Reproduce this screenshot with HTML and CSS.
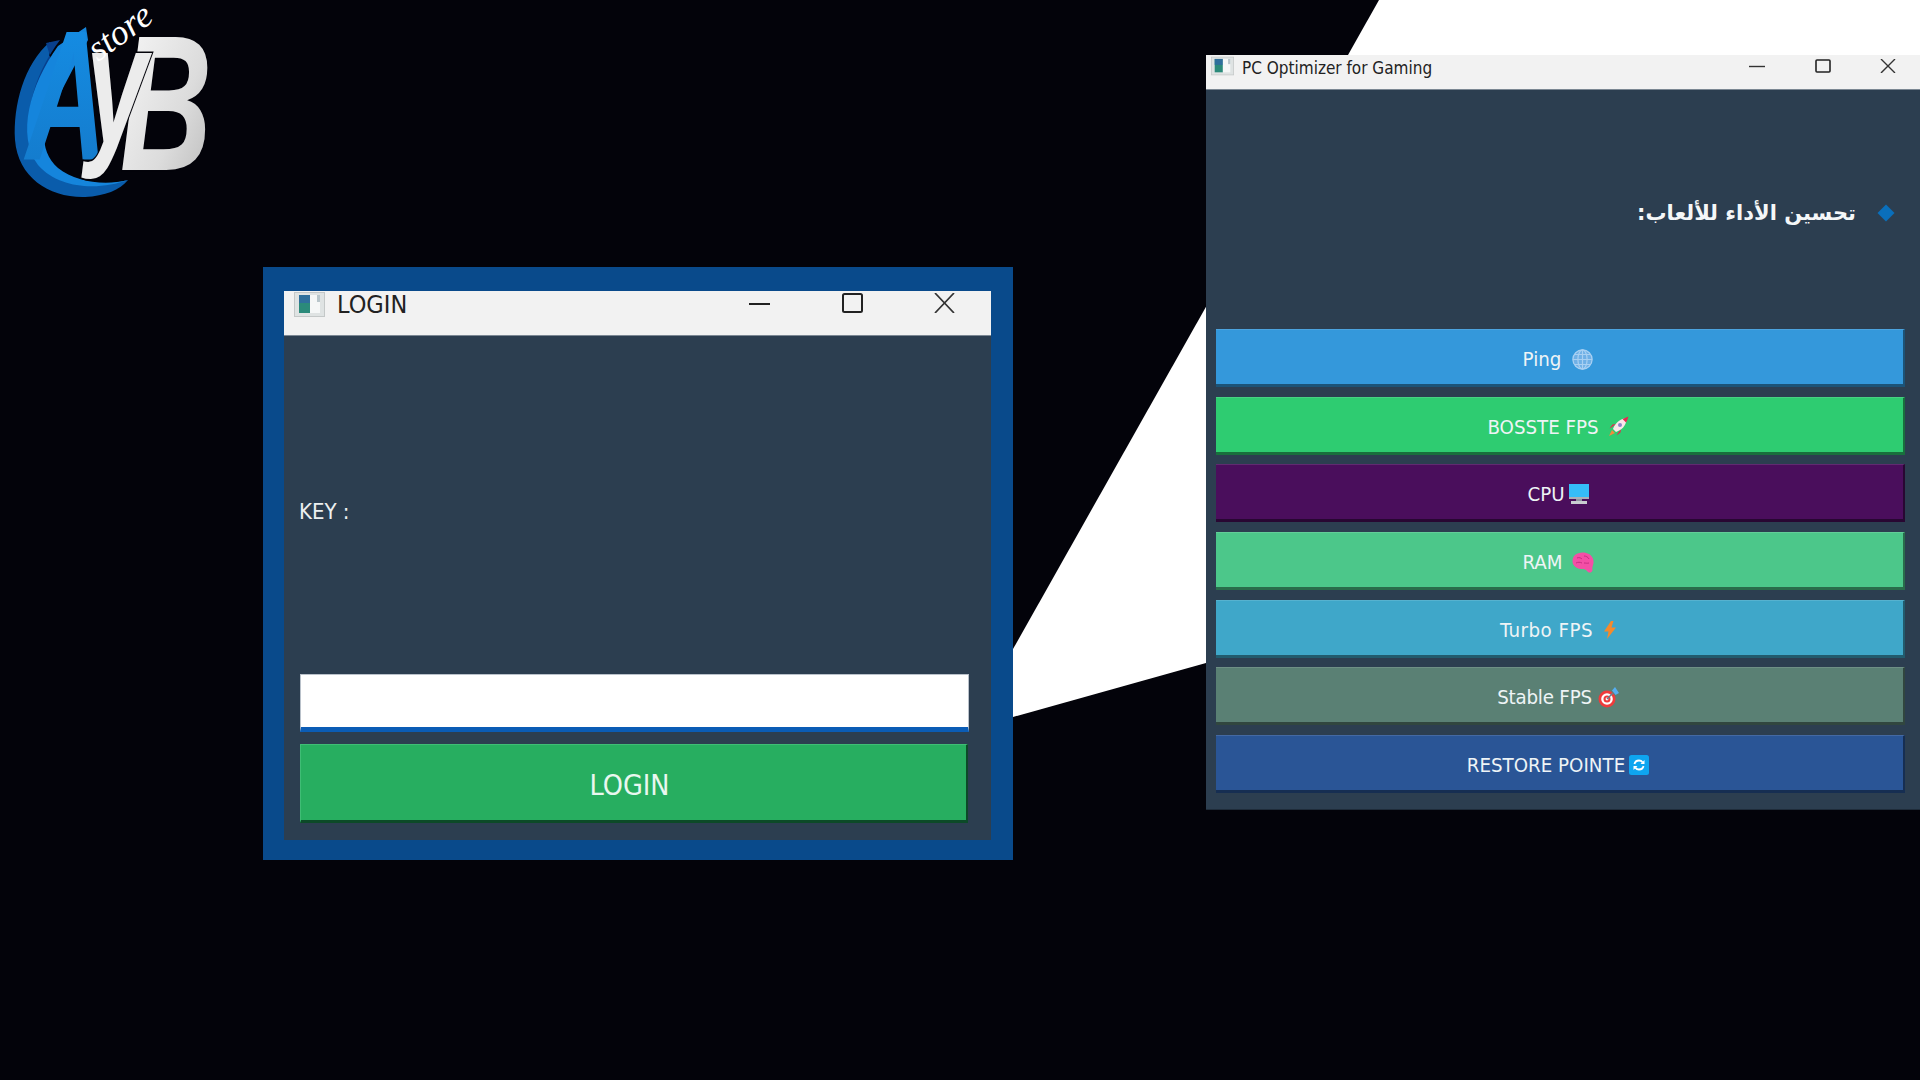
FILE: index.html
```html
<!DOCTYPE html>
<html lang="en">
<head>
<meta charset="utf-8">
<title>AyB store</title>
<link rel="stylesheet" href="styles.css">
</head>
<body>
<div class="desktop">
  <svg class="backdrop" viewBox="0 0 1920 1080" aria-hidden="true"><polygon points="1379,0 1920,0 1920,463 1013,717 1013,649" fill="#fff"/></svg>

  <svg class="logo" viewBox="0 0 240 210" role="img" aria-label="AyB store">
    <defs>
      <linearGradient id="bGrad" x1="0" y1="0" x2="1" y2="1"><stop offset="0" stop-color="#fbfbfb"/><stop offset=".6" stop-color="#dcdcdc"/><stop offset="1" stop-color="#b5b5b5"/></linearGradient>
      <linearGradient id="aGrad" x1="0" y1="0" x2="0" y2="1"><stop offset="0" stop-color="#1590e8"/><stop offset="1" stop-color="#1478c8"/></linearGradient>
    </defs>
    <path d="M50 42C24 64 13 105 15 140C18 178 50 198 85 197C105 196 120 190 128 180C100 188 60 184 42 160C25 136 30 100 48 75Z" fill="#0a5cab"/>
    <path d="M46 43L60 40C36 72 24 110 32 140C26 105 36 78 52 62Z" fill="#083f8c"/>
    <path d="M58 46L86 27L88 40L62 90C40 120 38 150 58 168C76 182 104 186 128 180C100 190 60 190 38 165C16 135 30 85 58 46Z" fill="#1585dc"/>
    <text class="logo-a" transform="translate(26 160) scale(.6 1)" fill="url(#aGrad)">A</text>
    <text class="logo-b" transform="translate(120 170) scale(.66 1)" fill="url(#bGrad)">B</text>
    <text class="logo-y" transform="translate(86 144) scale(.65 1)" fill="#ececec">y</text>
    <text class="logo-store" transform="translate(98 62) rotate(-36)" fill="#fff">store</text>
  </svg>

  <div class="login-frame">
    <div class="window login-window">
      <div class="titlebar login-titlebar">
        <svg class="app-icon login-icon" viewBox="0 0 31 25" aria-hidden="true"><rect x=".5" y=".5" width="30" height="24" fill="#dfe3e3" stroke="#c4c8c8"/><rect x="5" y="3" width="11" height="18" fill="#2b8a7a"/><rect x="5" y="3" width="11" height="8" fill="#2f6f9c"/><rect x="16" y="3" width="10" height="18" fill="#f5f7f7"/><rect x="23" y="3" width="3" height="7" fill="#b9c6cb"/></svg>
        <span class="login-title">LOGIN</span>
        <div class="caption-buttons login-caption">
          <svg width="21" height="20" viewBox="0 0 21 20" aria-hidden="true"><path d="M0 11h21" stroke="#222" stroke-width="2"/></svg>
          <svg width="21" height="20" viewBox="0 0 21 20" aria-hidden="true"><rect x="1" y="1" width="19" height="18" rx="1.5" fill="none" stroke="#222" stroke-width="2"/></svg>
          <svg width="21" height="20" viewBox="0 0 21 20" aria-hidden="true"><path d="M1 0L20 20M20 0L1 20" stroke="#333" stroke-width="1.7"/></svg>
        </div>
      </div>
      <div class="login-body">
        <label class="key-label">KEY :</label>
        <div class="login-form">
          <div class="key-input"></div>
          <div class="login-button">LOGIN</div>
        </div>
      </div>
    </div>
  </div>

  <div class="window optimizer-window">
    <div class="titlebar optimizer-titlebar">
      <svg class="app-icon optimizer-icon" viewBox="0 0 31 25" aria-hidden="true"><rect x=".5" y=".5" width="30" height="24" fill="#dfe3e3" stroke="#c4c8c8"/><rect x="5" y="3" width="11" height="18" fill="#2b8a7a"/><rect x="5" y="3" width="11" height="8" fill="#2f6f9c"/><rect x="16" y="3" width="10" height="18" fill="#f5f7f7"/><rect x="23" y="3" width="3" height="7" fill="#b9c6cb"/></svg>
      <span class="optimizer-title">PC Optimizer for Gaming</span>
      <div class="caption-buttons optimizer-caption">
        <svg width="16" height="14" viewBox="0 0 16 14" aria-hidden="true"><path d="M0 7.5h16" stroke="#333" stroke-width="1.4"/></svg>
        <svg width="16" height="14" viewBox="0 0 16 14" aria-hidden="true"><rect x="1" y="1" width="14" height="12" rx="1" fill="none" stroke="#222" stroke-width="1.6"/></svg>
        <svg width="16" height="14" viewBox="0 0 16 14" aria-hidden="true"><path d="M1 0L15 14M15 0L1 14" stroke="#333" stroke-width="1.4"/></svg>
      </div>
    </div>
    <div class="heading-area">
      <span class="diamond"></span>
      <h1 class="heading" dir="rtl">تحسين الأداء للألعاب:</h1>
    </div>
    <div class="action-list">
      <div class="action btn-ping"><span>Ping</span>
        <svg class="glyph wide" width="21" height="21" viewBox="0 0 21 21" aria-hidden="true"><circle cx="10.5" cy="10.5" r="10" fill="#6fb0e6"/><g fill="none" stroke="#a8d0f2" stroke-width="1.2"><circle cx="10.5" cy="10.5" r="9.6"/><ellipse cx="10.5" cy="10.5" rx="4.6" ry="9.6"/><path d="M10.5 1v19M1 10.5h19M2.5 5.5h16M2.5 15.5h16"/></g></svg></div>
      <div class="action btn-boost"><span>BOSSTE FPS</span>
        <svg class="glyph rocket" width="21" height="21" viewBox="0 0 21 21" aria-hidden="true"><path d="M1 20L4 14L7 17Z" fill="#f58a3c"/><path d="M4 11L1.5 12.5L4.5 8.5L8 8ZM10 17L8.5 19.5L12.5 16.5L13 13Z" fill="#e8274f"/><path d="M5 13C7 7 12 3 17 2.5L18.5 4C18 9 14 14 8 16Z" fill="#fbe6ea"/><path d="M14.5 3C16 2.3 19 1 20.5.5C20 2 19 5 18 6.5Z" fill="#e8274f"/><circle cx="12" cy="9" r="2" fill="#8b86c9"/></svg></div>
      <div class="action btn-cpu"><span>CPU</span>
        <svg class="glyph narrow" width="20" height="20" viewBox="0 0 20 20" aria-hidden="true"><rect y="0" width="20" height="13" fill="#35bdf8"/><rect y="13" width="20" height="2" fill="#aab0b8"/><rect x="7" y="15" width="6" height="2" fill="#8f96a0"/><rect x="2" y="17" width="16" height="3" fill="#c9ccd1"/></svg></div>
      <div class="action btn-ram"><span>RAM</span>
        <svg class="glyph rocket" width="22" height="21" viewBox="0 0 22 21" aria-hidden="true"><path d="M3 3C6 0 13-.5 17 2C21 4.500 22.500 9 21 13C20.500 15 20 16 20.500 18C20.500 20 18 21.500 16 20C15 18.500 13 17 11 17C7 17.500 3 16 1 12C0 9 .5 5 3 3Z" fill="#f44fa6"/><path d="M5 6c2-1 4 0 5 1M12 4c2 0 4 1 5 3M4 11c2-1 4-1 6 0M12 11c2 0 3 .5 5 0" fill="none" stroke="#c92d82" stroke-width="1"/></svg></div>
      <div class="action btn-turbo"><span>Turbo FPS</span>
        <svg class="glyph wide" width="12" height="18" viewBox="0 0 12 18" aria-hidden="true"><path d="M7 0L0 10.500H4.500L3 18L12 6.500H7.500L9.500 0Z" fill="#f58a2c"/></svg></div>
      <div class="action btn-stable"><span>Stable FPS</span>
        <svg class="glyph tight" width="21" height="21" viewBox="0 0 21 21" aria-hidden="true"><circle cx="9" cy="12" r="8.500" fill="#ef3b3b"/><circle cx="9" cy="12" r="5.800" fill="#fff"/><circle cx="9" cy="12" r="3.500" fill="#ef3b3b"/><circle cx="9" cy="12" r="1.400" fill="#fff"/><path d="M9 12L15 6" stroke="#6b7f8c" stroke-width="1.500"/><path d="M14 3.500L17 0L21 6L17.500 8Z" fill="#55aef0"/></svg></div>
      <div class="action btn-restore"><span>RESTORE POINTE</span>
        <svg class="glyph narrow" width="20" height="20" viewBox="0 0 20 20" aria-hidden="true"><rect width="20" height="20" rx="2.500" fill="#0ea5f0"/><path d="M5.500 9C6 6.500 8 5.500 10 5.500C11.500 5.500 12.800 6.200 13.500 7.300M14.500 11C14 13.500 12 14.500 10 14.500C8.500 14.500 7.200 13.800 6.500 12.700" fill="none" stroke="#fff" stroke-width="1.800"/><path d="M15.500 5V9H11.500ZM4.500 15V11H8.500Z" fill="#fff"/></svg></div>
    </div>
  </div>
</div>
</body>
</html>
```
FILE: styles.css
```css
* { box-sizing: border-box; }
html, body { margin: 0; padding: 0; background: #03030a; }
body { font-family: "DejaVu Sans", "Liberation Sans", sans-serif; font-stretch: condensed; }

.desktop { position: relative; width: 1920px; height: 1080px; overflow: hidden; background: #03030a; }
.backdrop { position: absolute; left: 0; top: 0; width: 1920px; height: 1080px; }

.logo { position: absolute; left: 0; top: 0; width: 240px; height: 210px; }
.logo text { font-family: "Liberation Sans", sans-serif; font-stretch: normal; font-weight: 700; font-style: italic; }
.logo-a { font-size: 186px; }
.logo-y { font-size: 170px; stroke: #03030a; stroke-width: 3px; paint-order: stroke; }
.logo-b { font-size: 193px; stroke: #03030a; stroke-width: 3px; paint-order: stroke; }
.logo .logo-store { font-family: "Liberation Serif", serif; font-size: 36px; font-weight: 400; }

.window { display: flex; flex-direction: column; background: #2c3e50; }
.titlebar { display: flex; flex: none; background: #f2f2f2; color: #222; border-bottom: 1px solid #7b8793; }
.caption-buttons { display: flex; margin-left: auto; }

.login-frame { position: absolute; left: 263px; top: 267px; width: 750px; height: 593px; padding: 24px 22px 20px 21px; background: #094a8b; }
.login-window { height: 100%; }
.login-titlebar { height: 45px; align-items: flex-start; }
.login-icon { width: 31px; height: 25px; margin: 1px 0 0 10px; }
.login-title { margin: -1px 0 0 12px; font-size: 25px; line-height: 30px; }
.login-caption { gap: 71.5px; margin-top: 2px; margin-right: 36px; }

.login-body { flex: 1; display: flex; flex-direction: column; padding: 0 22px 17px 16px; }
.key-label { margin-top: 161px; margin-left: -1px; font-size: 22px; line-height: 30px; color: #ecf0f1; }
.login-form { margin-top: auto; display: flex; flex-direction: column; gap: 12px; }
.key-input { height: 58px; background: #fff; border: 1px solid #b9c1ca; border-bottom: 5px solid #0b5cb5; }
.login-button { width: 668px; height: 79px; display: flex; align-items: center; justify-content: center; padding: 6px 8px 0 0; font-size: 28.5px; color: #e9f7ef; background: #27ae60; border: 1px solid #3fbd75; border-right: 2px solid #0c4a28; border-bottom: 3px solid #0c4a28; }

.optimizer-window { position: absolute; left: 1206px; top: 55px; width: 714px; height: 755px; border-bottom: 1px solid #1f2c3a; }
.optimizer-titlebar { height: 35px; }
.optimizer-icon { width: 23px; height: 20px; margin: 1px 0 0 5px; }
.optimizer-title { margin: 1px 0 0 8px; font-size: 17px; line-height: 24px; }
.optimizer-caption { gap: 49.5px; margin-top: 4px; margin-right: 24px; }

.heading-area { flex: 1; display: flex; flex-direction: row-reverse; align-items: center; gap: 24px; padding: 7px 28px 0 0; }
.diamond { width: 12px; height: 12px; background: #0a6fbb; transform: rotate(45deg); }
.heading { margin: 0; font: 700 21px "DejaVu Sans", sans-serif; color: #f5f7f8; }

.action-list { display: flex; flex-direction: column; gap: 9.67px; padding: 0 15px 16px 10px; }
.action { height: 58px; display: flex; align-items: center; justify-content: center; padding: 4px 3px 0 0; font-size: 20.3px; color: #eef4f6; border-top: 1px solid rgba(255,255,255,.12); border-right: 2px solid rgba(0,0,0,.45); border-bottom: 3px solid rgba(0,0,0,.45); }
.glyph { flex: none; }
.glyph.wide { margin-left: 11px; }
.glyph.rocket { margin-left: 9px; }
.glyph.narrow { margin-left: 4px; }
.glyph.tight { margin-left: 6px; }

.btn-ping { background: #3498db; }
.btn-boost { background: #2ecc71; }
.btn-cpu { background: #4a0e5c; }
.btn-ram { background: #4cc78a; }
.btn-turbo { background: #3fa7c9; letter-spacing: .5px; }
.btn-stable { background: #5a8074; letter-spacing: -.2px; }
.btn-restore { background: #2a5596; }
```
